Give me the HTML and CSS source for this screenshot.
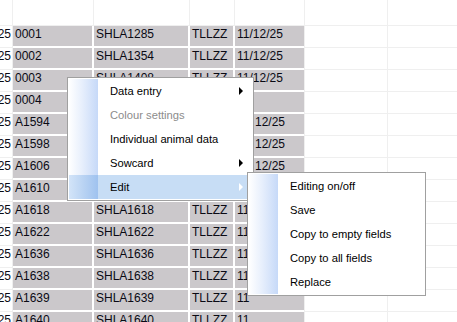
FILE: index.html
```html
<!DOCTYPE html>
<html lang="en">
<head>
    <meta charset="UTF-8">
    <title>Herd list</title>
    <link rel="stylesheet" href="styles.css">
</head>
<body>
    <div class="grid">
        <div class="row head">
            <div class="cell c0"></div>
            <div class="cell c1"></div>
            <div class="cell c2"></div>
            <div class="cell c3"></div>
            <div class="cell c4"></div>
            <div class="cell blank"></div>
            <div class="cell blank"></div>
        </div>
        <div class="row"><div class="cell c0"><span>11/12/25</span></div><div class="cell c1">0001</div><div class="cell c2">SHLA1285</div><div class="cell c3">TLLZZ</div><div class="cell c4">11/12/25</div><div class="cell blank"></div><div class="cell blank"></div></div>
        <div class="row"><div class="cell c0"><span>11/12/25</span></div><div class="cell c1">0002</div><div class="cell c2">SHLA1354</div><div class="cell c3">TLLZZ</div><div class="cell c4">11/12/25</div><div class="cell blank"></div><div class="cell blank"></div></div>
        <div class="row"><div class="cell c0"><span>11/12/25</span></div><div class="cell c1">0003</div><div class="cell c2">SHLA1408</div><div class="cell c3">TLLZZ</div><div class="cell c4">11/12/25</div><div class="cell blank"></div><div class="cell blank"></div></div>
        <!-- rows below are partly hidden by the context menu -->
        <div class="row"><div class="cell c0"><span>11/12/25</span></div><div class="cell c1">0004</div><div class="cell c2"></div><div class="cell c3"></div><div class="cell c4"></div><div class="cell blank"></div><div class="cell blank"></div></div>
        <div class="row"><div class="cell c0"><span>11/12/25</span></div><div class="cell c1">A1594</div><div class="cell c2"></div><div class="cell c3"></div><div class="cell c4 tail"><span>12/25</span></div><div class="cell blank"></div><div class="cell blank"></div></div>
        <div class="row"><div class="cell c0"><span>11/12/25</span></div><div class="cell c1">A1598</div><div class="cell c2"></div><div class="cell c3"></div><div class="cell c4 tail"><span>12/25</span></div><div class="cell blank"></div><div class="cell blank"></div></div>
        <div class="row"><div class="cell c0"><span>11/12/25</span></div><div class="cell c1">A1606</div><div class="cell c2"></div><div class="cell c3"></div><div class="cell c4 tail"><span>12/25</span></div><div class="cell blank"></div><div class="cell blank"></div></div>
        <div class="row"><div class="cell c0"><span>11/12/25</span></div><div class="cell c1">A1610</div><div class="cell c2"></div><div class="cell c3"></div><div class="cell c4 tail"><span>12/25</span></div><div class="cell blank"></div><div class="cell blank"></div></div>
        <div class="row"><div class="cell c0"><span>11/12/25</span></div><div class="cell c1">A1618</div><div class="cell c2">SHLA1618</div><div class="cell c3">TLLZZ</div><div class="cell c4">11</div><div class="cell blank"></div><div class="cell blank"></div></div>
        <div class="row"><div class="cell c0"><span>11/12/25</span></div><div class="cell c1">A1622</div><div class="cell c2">SHLA1622</div><div class="cell c3">TLLZZ</div><div class="cell c4">11</div><div class="cell blank"></div><div class="cell blank"></div></div>
        <div class="row"><div class="cell c0"><span>11/12/25</span></div><div class="cell c1">A1636</div><div class="cell c2">SHLA1636</div><div class="cell c3">TLLZZ</div><div class="cell c4">11</div><div class="cell blank"></div><div class="cell blank"></div></div>
        <div class="row"><div class="cell c0"><span>11/12/25</span></div><div class="cell c1">A1638</div><div class="cell c2">SHLA1638</div><div class="cell c3">TLLZZ</div><div class="cell c4">11</div><div class="cell blank"></div><div class="cell blank"></div></div>
        <div class="row"><div class="cell c0"><span>11/12/25</span></div><div class="cell c1">A1639</div><div class="cell c2">SHLA1639</div><div class="cell c3">TLLZZ</div><div class="cell c4">11</div><div class="cell blank"></div><div class="cell blank"></div></div>
        <div class="row"><div class="cell c0"><span>11/12/25</span></div><div class="cell c1">A1640</div><div class="cell c2">SHLA1640</div><div class="cell c3">TLLZZ</div><div class="cell c4">11</div><div class="cell blank"></div><div class="cell blank"></div></div>
    </div>

    <!-- context menu -->
    <div class="menu main-menu">
        <div class="item"><span class="strip"></span><span class="label">Data entry</span><span class="arrow"></span></div>
        <div class="item disabled"><span class="strip"></span><span class="label">Colour settings</span></div>
        <div class="item"><span class="strip"></span><span class="label">Individual animal data</span></div>
        <div class="item"><span class="strip"></span><span class="label">Sowcard</span><span class="arrow"></span></div>
        <div class="item active"><span class="strip"></span><span class="label">Edit</span><span class="arrow"></span></div>
    </div>

    <div class="menu sub-menu">
        <div class="item"><span class="strip"></span><span class="label">Editing on/off</span></div>
        <div class="item"><span class="strip"></span><span class="label">Save</span></div>
        <div class="item"><span class="strip"></span><span class="label">Copy to empty fields</span></div>
        <div class="item"><span class="strip"></span><span class="label">Copy to all fields</span></div>
        <div class="item"><span class="strip"></span><span class="label">Replace</span></div>
    </div>
</body>
</html>
```

FILE: styles.css
```css
body {
    margin: 0;
    background-color: #fff;
    font-family: 'Liberation Sans', Arial, sans-serif;
    font-size: 12px;
    color: #000;
    overflow: hidden;
}

.grid {
    display: flex;
    flex-direction: column;
}

.row {
    display: flex;
    height: 22px;
}

.row.head {
    height: 26px;
}

.cell {
    flex-shrink: 0;
    box-sizing: border-box;
    height: 20px;
    line-height: 17px;
    padding-left: 2px;
    margin-right: 2px;
    background-color: #cbc8cb;
    white-space: nowrap;
    overflow: hidden;
    color: #0a0a14;
}

.c0 {
    width: 13px;
    height: 22px;
    margin-right: 0;
    padding-left: 0;
    background-color: #fff;
    border-right: 1px solid #efefef;
    border-bottom: 1px solid #efefef;
    display: flex;
    justify-content: flex-end;
}

.c0 span {
    padding-right: 1px;
}

.c1 { width: 79px; }
.c2 { width: 94px; }
.c3 { width: 43px; }
.c4 { width: 69px; margin-right: 0; }

/* date cells whose start is under the menu: only the tail shows */
.c4.tail {
    padding-left: 20px;
}

.blank {
    width: 83px;
    height: 22px;
    margin-right: 0;
    background-color: #fff;
    border-left: 1px solid #efefef;
    border-bottom: 1px solid #efefef;
}

.head .cell {
    height: 26px;
    margin-right: 0;
    background-color: #fff;
    border-bottom: 1px solid #efefef;
    border-right: 1px solid #efefef;
}

.head .c1 { width: 81px; }
.head .c2 { width: 96px; }
.head .c3 { width: 45px; }
.head .c4 { width: 69px; border-right: none; }
.head .blank { border-right: none; }

/* context menus */
.menu {
    position: absolute;
    background-color: #fff;
    border: 1px solid #a0a0a0;
    padding: 1px;
    font-size: 11.2px;
}

.main-menu {
    left: 67px;
    top: 77px;
    width: 183px;
}

.sub-menu {
    left: 247px;
    top: 172px;
    width: 175px;
}

.item {
    display: flex;
    align-items: center;
    height: 24px;
    position: relative;
}

.strip {
    width: 29px;
    height: 100%;
    flex-shrink: 0;
    background: linear-gradient(to right, #ffffff, #e7effc 45%, #c6d9f8);
}

.label {
    flex: 1;
    padding-left: 12px;
    line-height: 24px;
}

.disabled .label {
    color: #8c8c8c;
}

.arrow {
    width: 0;
    height: 0;
    margin-right: 9px;
    border-left: 4px solid #000;
    border-top: 4px solid transparent;
    border-bottom: 4px solid transparent;
}

.active {
    background-color: #c7ddf5;
}

.active .strip {
    background: linear-gradient(to right, #d3e4f8, #b9d3f3 50%, #9fc2ef);
}

.active .arrow {
    border-left-color: #fff;
}
```
